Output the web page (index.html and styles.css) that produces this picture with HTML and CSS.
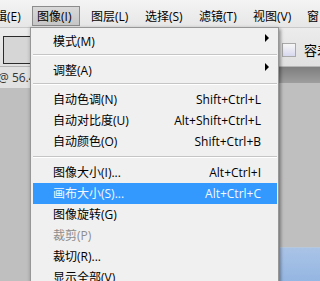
FILE: index.html
```html
<!DOCTYPE html>
<html lang="zh-CN">

<head>
    <meta charset="UTF-8">
    <title>图像菜单</title>
    <link rel="stylesheet" href="styles.css">
</head>

<body>
    <div class="app">
        <div class="menubar">
            <span class="mbItem">编辑(E)</span>
            <span class="mbItem active">图像(I)</span>
            <span class="mbItem">图层(L)</span>
            <span class="mbItem">选择(S)</span>
            <span class="mbItem">滤镜(T)</span>
            <span class="mbItem">视图(V)</span>
            <span class="mbItem">窗口(W)</span>
        </div>

        <div class="options">
            <div class="preset"></div>
            <div class="optRight">
                <span class="optBtn"></span>
                <span class="optText">容差:</span>
            </div>
        </div>

        <div class="tabbar">
            <div class="tab">@ 56.4%(RGB/8)</div>
        </div>

        <div class="workspace">
            <div class="canvas"></div>
        </div>

        <!-- 图像 下拉菜单 -->
        <ul class="menu">
            <li class="sub"><span>模式(M)</span><i class="arrow"></i></li>
            <li class="sep"></li>
            <li class="sub"><span>调整(A)</span><i class="arrow"></i></li>
            <li class="sep"></li>
            <li><span>自动色调(N)</span><span class="key">Shift+Ctrl+L</span></li>
            <li><span>自动对比度(U)</span><span class="key">Alt+Shift+Ctrl+L</span></li>
            <li><span>自动颜色(O)</span><span class="key">Shift+Ctrl+B</span></li>
            <li class="sep wide"></li>
            <li><span>图像大小(I)...</span><span class="key">Alt+Ctrl+I</span></li>
            <li class="hover"><span>画布大小(S)...</span><span class="key">Alt+Ctrl+C</span></li>
            <li><span>图像旋转(G)</span></li>
            <li class="disabled"><span>裁剪(P)</span></li>
            <li><span>裁切(R)...</span></li>
            <li><span>显示全部(V)</span></li>
        </ul>
    </div>
</body>

</html>
```

FILE: styles.css
```css
* {
    margin: 0;
    padding: 0;
    box-sizing: border-box;
}

li {
    list-style: none;
}

body {
    font-family: "Open Sans", "Noto Sans CJK SC", sans-serif;
    font-size: 12px;
    color: #000;
    background-color: #bebebe;
}

.app {
    position: relative;
    width: 320px;
    height: 281px;
    overflow: hidden;
    display: flex;
    flex-direction: column;
}

/* 顶部菜单栏 */
.menubar {
    height: 28px;
    flex-shrink: 0;
    display: flex;
    align-items: center;
    gap: 6px;
    padding-top: 4px;
    background: linear-gradient(#f4f4f4, #e6e6e6);
    border-bottom: 1px solid #c9c9c9;
    white-space: nowrap;
}

.menubar .mbItem {
    flex-shrink: 0;
    width: 48px;
    height: 20px;
    line-height: 19px;
    padding-left: 4px;
    border: 1px solid transparent;
}

.menubar .mbItem:first-child {
    margin-left: -22px;
}

.menubar .mbItem.active {
    border-color: #8c8c8c;
    background: linear-gradient(#d9d9d9, #c6c6c6);
}

/* 选项栏 */
.options {
    height: 39px;
    flex-shrink: 0;
    display: flex;
    justify-content: space-between;
    align-items: center;
    padding: 5px 0 0 3px;
    background: linear-gradient(#ececec, #e0e0e0);
    border-bottom: 1px solid #b5b5b5;
}

.options .preset {
    width: 28px;
    height: 28px;
    border: 1px solid #2b2b2b;
    background-color: #d6d6d6;
}

.options .optRight {
    display: flex;
    align-items: center;
    gap: 8px;
    width: 38px;
    overflow: hidden;
    white-space: nowrap;
}

.options .optBtn {
    flex-shrink: 0;
    width: 14px;
    height: 14px;
    border: 1px solid #a9a9a9;
    background: linear-gradient(#f7f7f7, #d8d8f0);
}

.options .optText {
    font-size: 13px;
}

/* 文档标签 */
.tabbar {
    height: 21px;
    flex-shrink: 0;
    background: linear-gradient(#7e7e7e, #9e9e9e) top / 100% 16px no-repeat, #bfbfbf;
}

.tabbar .tab {
    width: 34px;
    height: 21px;
    line-height: 21px;
    margin-left: -2px;
    overflow: hidden;
    color: #333;
    background-color: #e1e1e1;
    white-space: nowrap;
}

.workspace {
    flex: 1;
    display: flex;
    flex-direction: column;
    justify-content: flex-end;
    align-items: flex-end;
    background-color: #bfbfbf;
}

.workspace .canvas {
    width: 40px;
    height: 34px;
    background: linear-gradient(#a9c3e6, #95b6e2);
    border-top: 1px solid #b8c8dc;
}

/* 下拉菜单 */
.menu {
    position: absolute;
    left: 30px;
    top: 27px;
    width: 249px;
    padding-top: 3px;
    background-color: #f0f0f0;
    border: 1px solid #979797;
    box-shadow: 2px 2px 3px rgba(0, 0, 0, .35), -1px 0 3px rgba(0, 0, 0, .12);
}

.menu li {
    display: flex;
    justify-content: space-between;
    align-items: flex-start;
    height: 21px;
    line-height: 21px;
    margin: 0 1px 0 2px;
    padding: 0 16px 0 20px;
    white-space: nowrap;
}

.menu li.sub {
    padding-right: 8px;
}

.menu li .arrow {
    margin-top: 3px;
    width: 0;
    height: 0;
    border-top: 4px solid transparent;
    border-bottom: 4px solid transparent;
    border-left: 4px solid #000;
}

.menu li.sep {
    height: 2px;
    margin: 2px 1px 4px 2px;
    padding: 0;
    border-top: 1px solid #c5c5c5;
    border-bottom: 1px solid #fff;
}

.menu li.sep.wide {
    margin-top: 4px;
}

.menu li.hover {
    color: #f2f8ff;
    background-color: #3399ff;
}

.menu li.disabled {
    color: #8d8d8d;
}
```
